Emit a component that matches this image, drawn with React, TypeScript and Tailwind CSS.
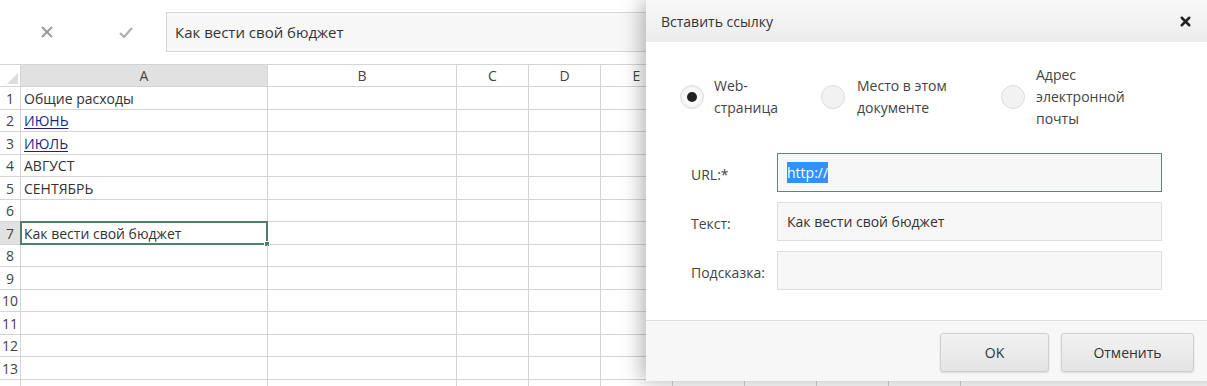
import { X } from "lucide-react";

const cols = [
  { key: "A", w: "w-[247px]" },
  { key: "B", w: "w-[189px]" },
  { key: "C", w: "w-[72px]" },
  { key: "D", w: "w-[72px]" },
  { key: "E", w: "w-[72px]" },
  { key: "F", w: "w-[72px]" },
  { key: "G", w: "w-[72px]" },
  { key: "H", w: "w-[72px]" },
  { key: "I", w: "w-[72px]" },
];

type Cell = { text: string; link?: boolean };

const rows: Cell[] = [
  { text: "Общие расходы" },
  { text: "ИЮНЬ", link: true },
  { text: "ИЮЛЬ", link: true },
  { text: "АВГУСТ" },
  { text: "СЕНТЯБРЬ" },
  { text: "" },
  { text: "Как вести свой бюджет" },
  { text: "" },
  { text: "" },
  { text: "" },
  { text: "" },
  { text: "" },
  { text: "" },
  { text: "" },
];

function FormulaBar() {
  return (
    <div className="flex h-[64px] items-center">
      <div className="flex w-[166px] items-center">
        <div className="ml-[41px] flex h-[12px] w-[12px] items-center justify-center">
          <svg width="12" height="12" viewBox="0 0 12 12">
            <path d="M1 1 L11 11 M11 1 L1 11" stroke="#9a9a9a" strokeWidth="2" />
          </svg>
        </div>
        <div className="ml-[66px] flex h-[12px] w-[14px] items-center justify-center">
          <svg width="14" height="11" viewBox="0 0 14 11">
            <path d="M1 6 L5 10 L13 1" stroke="#b0b0b0" strokeWidth="2.2" fill="none" />
          </svg>
        </div>
      </div>
      <div className="flex h-[40px] flex-1 items-center border border-[#d6d6d6] bg-[#f7f7f7] pl-[8px] text-[15px] text-[#333]">
        Как вести свой бюджет
      </div>
    </div>
  );
}

function Sheet() {
  return (
    <div className="flex flex-col">
      {/* column headers; those under the dialog stay blank */}
      <div className="flex h-[23px] border-t border-b border-[#d4d4d4] text-[14px] text-[#444]">
        <div className="relative w-[21px] shrink-0 border-r border-[#d4d4d4] bg-white">
          <svg className="absolute right-[2px] bottom-[2px]" width="11" height="11" viewBox="0 0 11 11">
            <path d="M11 0 L11 11 L0 11 Z" fill="#dcdcdc" />
          </svg>
        </div>
        {cols.map((c, j) => (
          <div
            key={c.key}
            className={`${c.w} flex shrink-0 items-center justify-center border-r border-[#d4d4d4] ${c.key === "A" ? "bg-[#e1e1e1]" : "bg-white"}`}
          >
            {j < 5 ? c.key : ""}
          </div>
        ))}
      </div>
      {rows.map((r, i) => (
        <div
          key={i}
          className={`flex border-b border-[#d4d4d4] text-[14px] text-[#333] ${i % 2 === 0 ? "h-[23px]" : "h-[22px]"}`}
        >
          <div
            className={`flex w-[21px] shrink-0 items-center justify-center border-r border-[#d4d4d4] text-[#444] ${i === 6 ? "bg-[#e1e1e1]" : "bg-white"}`}
          >
            {/* row 14 sits below the window edge */}
            {i < 13 ? i + 1 : ""}
          </div>
          {cols.map((c, j) => (
            <div key={c.key} className={`${c.w} relative flex shrink-0 items-center border-r border-[#d4d4d4] pl-[3px]`}>
              {j === 0 && (
                <span className={r.link ? "text-[#1f1f8a] underline underline-offset-2" : ""}>{r.text}</span>
              )}
              {j === 0 && i === 6 && (
                <div className="absolute -top-[1px] -left-[1px] -right-[1px] -bottom-[1px] border-2 border-[#4d7f69]">
                  <div className="absolute -right-[4px] -bottom-[4px] h-[6px] w-[6px] border border-white bg-[#4d7f69]" />
                </div>
              )}
            </div>
          ))}
        </div>
      ))}
    </div>
  );
}

function Radio({ checked }: { checked?: boolean }) {
  return (
    <div className="flex h-[24px] w-[24px] shrink-0 items-center justify-center rounded-full border border-[#dddddd] bg-[#f2f2f2]">
      {checked && (
        <div className="flex h-[18px] w-[18px] items-center justify-center rounded-full bg-[#f9f9f9]">
          <div className="h-[10px] w-[10px] rounded-full bg-[#222]" />
        </div>
      )}
    </div>
  );
}

function Field({ label, children, focused }: { label: string; children?: React.ReactNode; focused?: boolean }) {
  return (
    <div className="flex h-[39px] items-center">
      <div className="w-[86px] pt-[3px] text-[14px] text-[#444]">{label}</div>
      <div
        className={`flex h-[39px] w-[385px] items-center border bg-[#f7f7f7] pl-[9px] text-[14px] text-[#333] ${focused ? "border-[#62857a]" : "border-[#dedede]"}`}
      >
        {children}
      </div>
    </div>
  );
}

function LinkDialog() {
  return (
    <div className="absolute top-0 left-[646px] flex h-[381px] w-[580px] flex-col bg-white shadow-[-4px_0_20px_rgba(0,0,0,0.3)]">
      <div className="flex h-[42px] shrink-0 items-center bg-gradient-to-b from-[#f8f8f8] to-[#ececec] pl-[15px] text-[14px] text-[#333]">
        <span className="flex-1">Вставить ссылку</span>
        <X className="mr-[33px] h-[15px] w-[15px] text-[#222]" strokeWidth={4} />
      </div>
      <div className="flex flex-1 flex-col pt-[22px] pl-[34px]">
        <div className="flex h-[66px] items-center text-[14px] leading-[22px] text-[#444]">
          <div className="flex w-[141px] items-center gap-[10px]">
            <Radio checked />
            <div className="flex w-[100px] flex-col">
              <span>Web-</span>
              <span>страница</span>
            </div>
          </div>
          <div className="flex w-[180px] items-center gap-[12px]">
            <Radio />
            <div className="flex w-[130px] flex-col">
              <span>Место в этом</span>
              <span>документе</span>
            </div>
          </div>
          <div className="flex items-center gap-[11px]">
            <Radio />
            <div className="flex w-[110px] flex-col">
              <span>Адрес</span>
              <span>электронной</span>
              <span>почты</span>
            </div>
          </div>
        </div>
        <div className="mt-[23px] flex flex-col gap-[10px] pl-[11px]">
          <Field label="URL:*" focused>
            <span className="bg-[#3390ff] text-white">http://</span>
          </Field>
          <Field label="Текст:">Как вести свой бюджет</Field>
          <Field label="Подсказка:" />
        </div>
      </div>
      <div className="flex h-[61px] shrink-0 items-start gap-[12px] border-t border-[#dcdcdc] bg-[#f7f7f7] pt-[12px] pl-[294px]">
        <button className="h-[39px] w-[109px] rounded-[3px] border border-[#cfcfcf] bg-gradient-to-b from-[#f2f2f2] to-[#e4e4e4] text-[14px] text-[#333] shadow-[0_1px_2px_rgba(0,0,0,0.12)]">
          OK
        </button>
        <button className="h-[39px] w-[133px] rounded-[3px] border border-[#cfcfcf] bg-gradient-to-b from-[#f2f2f2] to-[#e4e4e4] text-[14px] text-[#333] shadow-[0_1px_2px_rgba(0,0,0,0.12)]">
          Отменить
        </button>
      </div>
    </div>
  );
}

export default function App() {
  return (
    <div className="relative h-[386px] w-[1207px] overflow-hidden bg-white font-['Open_Sans',sans-serif]">
      <FormulaBar />
      <Sheet />
      <LinkDialog />
    </div>
  );
}
